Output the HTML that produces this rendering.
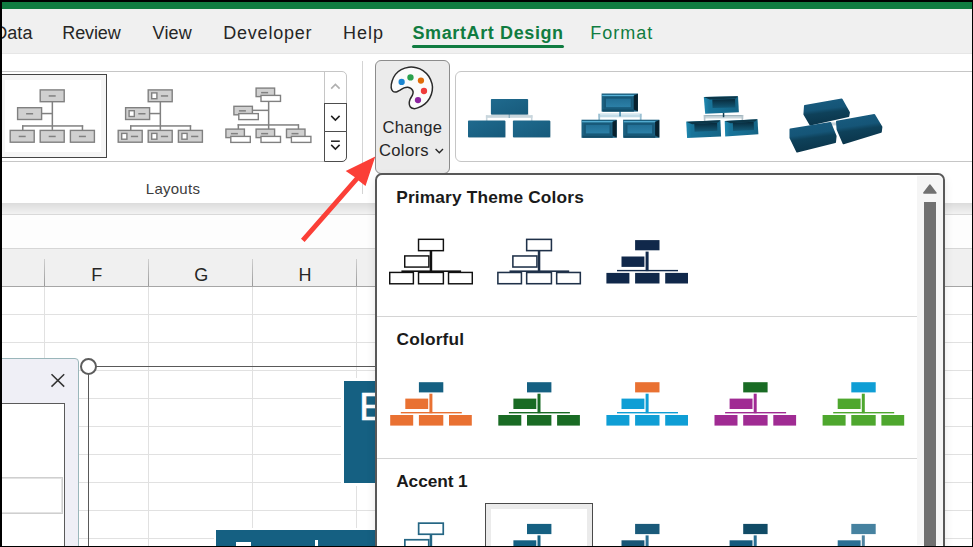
<!DOCTYPE html>
<html><head><meta charset="utf-8"><title>Excel SmartArt Change Colors</title>
<style>
html,body{margin:0;padding:0;}
body{width:973px;height:547px;overflow:hidden;background:#fff;font-family:"Liberation Sans",sans-serif;}
#root{position:relative;width:973px;height:547px;overflow:hidden;background:#fff;}
#root div{position:absolute;box-sizing:border-box;}
.t{white-space:nowrap;line-height:1;font-family:"Liberation Sans",sans-serif;}
svg{position:absolute;left:0;top:0;}
</style></head><body><div id="root">

<div style="left:0;top:0;width:973px;height:2px;background:#000"></div>
<div style="left:0;top:2px;width:973px;height:7px;background:#107c41"></div>
<div style="left:0;top:9px;width:973px;height:44.6px;background:#f0f0f0;border-bottom:1px solid #e6e6e6"></div>
<div style="left:0;top:203px;width:973px;height:12px;background:linear-gradient(#dcdcdc,#f2f2f2);border-bottom:1px solid #d9d9d9"></div>
<div style="left:0;top:215px;width:973px;height:33px;background:#fdfdfd"></div>
<div style="left:0;top:248px;width:973px;height:38px;background:#f0f0f0;border-top:1px solid #d6d6d6"></div>
<div style="left:0;top:286px;width:973px;height:1px;background:#a6a6a6"></div>
<div class="t" style="left:-5.80px;letter-spacing:0.063px;top:24.06px;font-size:18px;color:#262626;font-weight:400;">Data</div>
<div class="t" style="left:62.30px;letter-spacing:-0.124px;top:24.06px;font-size:18px;color:#262626;font-weight:400;">Review</div>
<div class="t" style="left:152.50px;letter-spacing:0.203px;top:24.06px;font-size:18px;color:#262626;font-weight:400;">View</div>
<div class="t" style="left:223.20px;letter-spacing:0.794px;top:24.06px;font-size:18px;color:#262626;font-weight:400;">Developer</div>
<div class="t" style="left:343.10px;letter-spacing:0.997px;top:24.06px;font-size:18px;color:#262626;font-weight:400;">Help</div>
<div class="t" style="left:412.50px;letter-spacing:0.612px;top:24.06px;font-size:18px;color:#107c41;font-weight:700;">SmartArt Design</div>
<div class="t" style="left:590.30px;letter-spacing:0.979px;top:24.06px;font-size:18px;color:#107c41;font-weight:400;">Format</div>
<div style="left:412.3px;top:45.3px;width:151.8px;height:3px;background:#107c41;border-radius:1.5px"></div>
<div style="left:-10px;top:71px;width:356.5px;height:91px;border:1px solid #c6c6c6;border-radius:5px;background:#fff"></div>
<div style="left:-2px;top:74px;width:109px;height:84px;border:1px solid #444;background:#f5f5f5"></div>
<div style="left:4.5px;top:80px;width:96.5px;height:72px;background:#fff"></div>
<div style="left:324px;top:72px;width:1px;height:31px;background:#c6c6c6"></div>
<div style="left:324px;top:103px;width:22.5px;height:28.6px;border:1.2px solid #4d4d4d;background:#fff"></div>
<div style="left:324px;top:131.2px;width:22.5px;height:30.6px;border:1.2px solid #4d4d4d;border-radius:0 0 5px 0;background:#fff"></div>
<div class="t" style="left:145.80px;letter-spacing:0.261px;top:180.90px;font-size:15px;color:#3c3c3c;font-weight:400;">Layouts</div>
<div style="left:362px;top:61px;width:1px;height:133px;background:#d4d4d4"></div>
<div style="left:375px;top:60px;width:75px;height:114px;border:1px solid #8c8c8c;border-radius:6px;background:#ebebeb"></div>
<div class="t" style="left:382.50px;letter-spacing:0.280px;top:119.55px;font-size:16.6px;color:#262626;font-weight:400;">Change</div>
<div class="t" style="left:379.00px;letter-spacing:0.329px;top:142.75px;font-size:16.6px;color:#262626;font-weight:400;">Colors</div>
<div style="left:454.5px;top:71px;width:540px;height:91px;border:1px solid #c6c6c6;border-radius:6px;background:#fff"></div>
<div style="left:0;top:314px;width:973px;height:1px;background:#e1e1e1"></div><div style="left:0;top:342px;width:973px;height:1px;background:#e1e1e1"></div><div style="left:0;top:370px;width:973px;height:1px;background:#e1e1e1"></div><div style="left:0;top:398px;width:973px;height:1px;background:#e1e1e1"></div><div style="left:0;top:426px;width:973px;height:1px;background:#e1e1e1"></div><div style="left:0;top:454px;width:973px;height:1px;background:#e1e1e1"></div><div style="left:0;top:482px;width:973px;height:1px;background:#e1e1e1"></div><div style="left:0;top:510px;width:973px;height:1px;background:#e1e1e1"></div><div style="left:0;top:538px;width:973px;height:1px;background:#e1e1e1"></div><div style="left:44px;top:287px;width:1px;height:260px;background:#e1e1e1"></div><div style="left:44px;top:259px;width:1px;height:27px;background:linear-gradient(#cfcfcf,#9a9a9a)"></div><div style="left:148px;top:287px;width:1px;height:260px;background:#e1e1e1"></div><div style="left:148px;top:259px;width:1px;height:27px;background:linear-gradient(#cfcfcf,#9a9a9a)"></div><div style="left:252px;top:287px;width:1px;height:260px;background:#e1e1e1"></div><div style="left:252px;top:259px;width:1px;height:27px;background:linear-gradient(#cfcfcf,#9a9a9a)"></div><div style="left:356px;top:287px;width:1px;height:260px;background:#e1e1e1"></div><div style="left:356px;top:259px;width:1px;height:27px;background:linear-gradient(#cfcfcf,#9a9a9a)"></div>
<div class="t" style="left:91.35px;top:266.26px;font-size:18px;color:#262626;font-weight:400;">F</div>
<div class="t" style="left:194.25px;top:266.26px;font-size:18px;color:#262626;font-weight:400;">G</div>
<div class="t" style="left:298.45px;top:266.26px;font-size:18px;color:#262626;font-weight:400;">H</div>
<div style="left:88px;top:366px;width:600px;height:300px;border:1px solid #595959;background:transparent"></div>
<div style="left:341px;top:378px;width:120px;height:108px;background:#fff"></div>
<div style="left:344px;top:380.5px;width:120px;height:102.5px;background:#156082"></div>
<div class="t" style="left:359.10px;top:386.99px;font-size:39px;color:#fff;font-weight:400;-webkit-text-stroke:0.5px #fff;">E</div>
<div style="left:213.5px;top:527.5px;width:220px;height:40px;background:#fff"></div>
<div style="left:216px;top:530px;width:220px;height:40px;background:#156082"></div>
<div style="left:235.5px;top:542.4px;width:15.4px;height:5px;background:#fff"></div>
<div style="left:315px;top:540px;width:3.3px;height:8px;background:#fff"></div>
<div style="left:79.7px;top:357.8px;width:17px;height:17px;border:2.9px solid #5c5c5c;border-radius:50%;background:#fff"></div>
<div style="left:-10px;top:358px;width:89px;height:300px;border:1px solid #9ab6ba;border-radius:4px;background:#efeff6"></div>
<div style="left:-10px;top:403px;width:75px;height:300px;border:1px solid #5a5a5a;background:#fff"></div>
<div style="left:-10px;top:477px;width:73px;height:36.5px;border:2.5px solid #e3e3e3;outline:1px solid #cfcfcf;outline-offset:-1px;background:#fff"></div>
<svg width="973" height="547" viewBox="0 0 973 547">
<rect x="51.60" y="101.90" width="1.50" height="28.00" fill="#808080" /><rect x="22.00" y="125.20" width="61.20" height="1.50" fill="#808080" /><rect x="22.00" y="125.40" width="1.50" height="5.00" fill="#808080" /><rect x="81.70" y="125.40" width="1.50" height="5.00" fill="#808080" /><rect x="41.70" y="112.80" width="10.50" height="1.50" fill="#808080" /><rect x="40.20" y="89.90" width="24.00" height="11.80" fill="#d0d0d0" stroke="#808080" stroke-width="1.4"/><rect x="48.70" y="95.20" width="7.00" height="1.50" fill="#808080" /><rect x="17.60" y="107.70" width="24.00" height="11.80" fill="#d0d0d0" stroke="#808080" stroke-width="1.4"/><rect x="26.10" y="113.00" width="7.00" height="1.50" fill="#808080" /><rect x="10.20" y="130.40" width="24.00" height="11.80" fill="#d0d0d0" stroke="#808080" stroke-width="1.4"/><rect x="18.70" y="135.70" width="7.00" height="1.50" fill="#808080" /><rect x="40.20" y="130.40" width="24.00" height="11.80" fill="#d0d0d0" stroke="#808080" stroke-width="1.4"/><rect x="48.70" y="135.70" width="7.00" height="1.50" fill="#808080" /><rect x="70.40" y="130.40" width="24.00" height="11.80" fill="#d0d0d0" stroke="#808080" stroke-width="1.4"/><rect x="78.90" y="135.70" width="7.00" height="1.50" fill="#808080" /><rect x="159.60" y="101.90" width="1.50" height="28.00" fill="#808080" /><rect x="130.00" y="125.20" width="61.20" height="1.50" fill="#808080" /><rect x="130.00" y="125.40" width="1.50" height="5.00" fill="#808080" /><rect x="189.70" y="125.40" width="1.50" height="5.00" fill="#808080" /><rect x="149.70" y="112.80" width="10.50" height="1.50" fill="#808080" /><rect x="148.20" y="89.90" width="24.00" height="11.80" fill="#d0d0d0" stroke="#808080" stroke-width="1.4"/><rect x="151.70" y="92.90" width="5.2" height="5.8" fill="#fff" stroke="#808080" stroke-width="1.4"/><rect x="160.90" y="95.20" width="7.20" height="1.50" fill="#808080" /><rect x="125.60" y="107.70" width="24.00" height="11.80" fill="#d0d0d0" stroke="#808080" stroke-width="1.4"/><rect x="129.10" y="110.70" width="5.2" height="5.8" fill="#fff" stroke="#808080" stroke-width="1.4"/><rect x="138.30" y="113.00" width="7.20" height="1.50" fill="#808080" /><rect x="118.20" y="130.40" width="24.00" height="11.80" fill="#d0d0d0" stroke="#808080" stroke-width="1.4"/><rect x="121.70" y="133.40" width="5.2" height="5.8" fill="#fff" stroke="#808080" stroke-width="1.4"/><rect x="130.90" y="135.70" width="7.20" height="1.50" fill="#808080" /><rect x="148.20" y="130.40" width="24.00" height="11.80" fill="#d0d0d0" stroke="#808080" stroke-width="1.4"/><rect x="151.70" y="133.40" width="5.2" height="5.8" fill="#fff" stroke="#808080" stroke-width="1.4"/><rect x="160.90" y="135.70" width="7.20" height="1.50" fill="#808080" /><rect x="178.40" y="130.40" width="24.00" height="11.80" fill="#d0d0d0" stroke="#808080" stroke-width="1.4"/><rect x="181.90" y="133.40" width="5.2" height="5.8" fill="#fff" stroke="#808080" stroke-width="1.4"/><rect x="191.10" y="135.70" width="7.20" height="1.50" fill="#808080" /><rect x="267.90" y="102.00" width="1.50" height="27.00" fill="#808080" /><rect x="237.60" y="124.20" width="61.20" height="1.50" fill="#808080" /><rect x="237.60" y="124.20" width="1.50" height="5.00" fill="#808080" /><rect x="297.70" y="124.20" width="1.50" height="5.00" fill="#808080" /><rect x="252.00" y="109.60" width="16.00" height="1.50" fill="#808080" /><rect x="256.10" y="88.10" width="18.5" height="8.5" fill="#d0d0d0" stroke="#808080" stroke-width="1.4"/><rect x="261.10" y="91.90" width="7.00" height="1.50" fill="#808080" /><rect x="261.00" y="95.40" width="19.5" height="6" fill="#fff" stroke="#808080" stroke-width="1.4"/><rect x="233.90" y="106.30" width="18.5" height="8.5" fill="#d0d0d0" stroke="#808080" stroke-width="1.4"/><rect x="238.90" y="110.10" width="7.00" height="1.50" fill="#808080" /><rect x="238.80" y="113.60" width="19.5" height="6" fill="#fff" stroke="#808080" stroke-width="1.4"/><rect x="225.90" y="129.10" width="18.5" height="8.5" fill="#d0d0d0" stroke="#808080" stroke-width="1.4"/><rect x="230.90" y="132.90" width="7.00" height="1.50" fill="#808080" /><rect x="230.80" y="136.40" width="19.5" height="6" fill="#fff" stroke="#808080" stroke-width="1.4"/><rect x="256.10" y="129.10" width="18.5" height="8.5" fill="#d0d0d0" stroke="#808080" stroke-width="1.4"/><rect x="261.10" y="132.90" width="7.00" height="1.50" fill="#808080" /><rect x="261.00" y="136.40" width="19.5" height="6" fill="#fff" stroke="#808080" stroke-width="1.4"/><rect x="286.50" y="129.10" width="18.5" height="8.5" fill="#d0d0d0" stroke="#808080" stroke-width="1.4"/><rect x="291.50" y="132.90" width="7.00" height="1.50" fill="#808080" /><rect x="291.40" y="136.40" width="19.5" height="6" fill="#fff" stroke="#808080" stroke-width="1.4"/>
<defs>
<linearGradient id="g1" x1="0" y1="0" x2="1" y2="1"><stop offset="0" stop-color="#1f6a8e"/><stop offset="1" stop-color="#175a7b"/></linearGradient>
<linearGradient id="g2" x1="0" y1="0" x2="0" y2="1"><stop offset="0" stop-color="#4aa0c6"/><stop offset=".25" stop-color="#2a7ea6"/><stop offset="1" stop-color="#0f4a66"/></linearGradient>
<linearGradient id="g2i" x1="0" y1="0" x2="0" y2="1"><stop offset="0" stop-color="#226f95"/><stop offset="1" stop-color="#2c80a7"/></linearGradient>
<linearGradient id="g3" x1="0" y1="0" x2="1" y2="0"><stop offset="0" stop-color="#1f8ab1"/><stop offset=".15" stop-color="#18749a"/><stop offset="1" stop-color="#156485"/></linearGradient>
<linearGradient id="g3i" x1="0" y1="0" x2="0" y2="1"><stop offset="0" stop-color="#08293a"/><stop offset="1" stop-color="#135a78"/></linearGradient>
<linearGradient id="g4" x1="0" y1="0" x2="0.22" y2="1"><stop offset="0" stop-color="#185c80"/><stop offset=".45" stop-color="#155577"/><stop offset=".6" stop-color="#0e415a"/><stop offset="1" stop-color="#0b364c"/></linearGradient>
<filter id="sh" x="-10%" y="-10%" width="120%" height="130%"><feGaussianBlur stdDeviation=".5"/></filter>
</defs>
<path d="M331.2,88.6 L335.4,84.4 L339.6,88.6" fill="none" stroke="#b0b0b0" stroke-width="1.6"/>
<path d="M331.2,115.9 L335.4,120.1 L339.6,115.9" fill="none" stroke="#1f1f1f" stroke-width="1.5"/>
<path d="M331,141.2 H339.8" fill="none" stroke="#1f1f1f" stroke-width="1.5"/>
<path d="M331.2,144.9 L335.4,149.1 L339.6,144.9" fill="none" stroke="#1f1f1f" stroke-width="1.5"/>
<path d="M391.18,87.67 C391.02,85.93 391.42,83.23 392.13,81.02 C392.84,78.80 393.95,76.26 395.46,74.36 C396.96,72.46 398.94,70.79 401.16,69.61 C403.38,68.42 406.23,67.55 408.77,67.23 C411.30,66.91 414.00,67.15 416.37,67.70 C418.75,68.26 420.97,69.13 423.03,70.56 C425.09,71.98 427.23,74.04 428.73,76.26 C430.24,78.48 431.48,81.49 432.06,83.87 C432.65,86.24 432.65,88.15 432.25,90.52 C431.86,92.90 430.91,95.91 429.69,98.13 C428.47,100.35 426.83,102.25 424.93,103.83 C423.03,105.42 420.18,106.84 418.28,107.64 C416.37,108.43 414.87,108.75 413.52,108.59 C412.18,108.43 410.91,107.64 410.19,106.69 C409.48,105.73 409.24,104.15 409.24,102.88 C409.24,101.61 409.64,100.43 410.19,99.08 C410.75,97.73 412.10,96.07 412.57,94.80 C413.05,93.53 413.28,92.50 413.05,91.47 C412.81,90.44 412.02,89.33 411.15,88.62 C410.27,87.91 409.01,87.32 407.82,87.19 C406.63,87.07 405.28,87.39 404.02,87.86 C402.75,88.34 401.48,89.37 400.21,90.05 C398.94,90.73 397.60,91.71 396.41,91.95 C395.22,92.19 393.95,92.19 393.08,91.47 C392.21,90.76 391.34,89.41 391.18,87.67Z" fill="#fbfbfb" stroke="#2a2a2a" stroke-width="1.5" stroke-linejoin="round"/>
<circle cx="401.64" cy="81.97" r="3.15" fill="#1c86d1"/>
<circle cx="410.48" cy="77.40" r="3.15" fill="#2aa14d"/>
<circle cx="420.94" cy="80.54" r="3.15" fill="#e06c08"/>
<circle cx="423.98" cy="91.00" r="3.15" fill="#ef3b3b"/>
<circle cx="417.99" cy="100.03" r="3.15" fill="#8c249f"/>
<path d="M435.6,149 L439.3,152.7 L443,149" fill="none" stroke="#262626" stroke-width="1.4"/>
<path d="M51.5,374.2 L64.2,386.6 M64.2,374.2 L51.5,386.6" fill="none" stroke="#333" stroke-width="1.5"/>
<rect x="485.9" y="115.2" width="46.6" height="2.6" fill="#c9d6dd"/><rect x="485.9" y="115.2" width="1.6" height="6" fill="#c9d6dd"/><rect x="530.9" y="115.2" width="1.6" height="6" fill="#c9d6dd"/><rect x="508.6" y="114" width="1.4" height="4" fill="#8fb0c0"/>
<rect x="491.29999999999995" y="99.6" width="37.1" height="15.6" fill="#7d9aa8" opacity=".55" filter="url(#sh)"/>
<rect x="490.9" y="99" width="37.1" height="15.6" rx=".8" fill="url(#g1)"/>
<rect x="468.4" y="121.19999999999999" width="37.3" height="16.6" fill="#7d9aa8" opacity=".55" filter="url(#sh)"/>
<rect x="468" y="120.6" width="37.3" height="16.6" rx=".8" fill="url(#g1)"/>
<rect x="513.3" y="121.19999999999999" width="37.3" height="16.6" fill="#7d9aa8" opacity=".55" filter="url(#sh)"/>
<rect x="512.9" y="120.6" width="37.3" height="16.6" rx=".8" fill="url(#g1)"/>
<rect x="598.3" y="113.4" width="43.3" height="3.9" fill="#c3dce8"/><rect x="598.3" y="113.4" width="43.3" height="1.2" fill="#e2eef4"/><rect x="598.3" y="114" width="1.8" height="6" fill="#9cc0d2"/><rect x="639.8" y="114" width="1.8" height="6" fill="#9cc0d2"/><rect x="619.3" y="111" width="1.5" height="5.4" fill="#3f86a8"/>
<rect x="601.6" y="93.5" width="36.3" height="18.1" fill="#1b6080"/>
<rect x="602.2" y="94.9" width="31.799999999999997" height="1.2" fill="#58b3d8"/>
<polygon points="637.9,93.8 637.9,111.3 633.6999999999999,109.39999999999999 633.6999999999999,95.7" fill="#07212e"/>
<rect x="604.2" y="97.1" width="28.099999999999998" height="11.500000000000002" fill="#175877"/>
<rect x="606.0" y="98.7" width="24.699999999999996" height="8.500000000000002" fill="url(#g2i)"/>
<rect x="602.6" y="109.39999999999999" width="31.299999999999997" height="2.2" fill="#134c68"/>
<rect x="581.5" y="119.7" width="35.2" height="18.1" fill="#1b6080"/>
<rect x="582.1" y="121.10000000000001" width="30.700000000000003" height="1.2" fill="#58b3d8"/>
<polygon points="616.7,120.0 616.7,137.5 612.5,135.60000000000002 612.5,121.9" fill="#07212e"/>
<rect x="584.1" y="123.3" width="27.000000000000004" height="11.500000000000002" fill="#175877"/>
<rect x="585.9" y="124.9" width="23.6" height="8.500000000000002" fill="url(#g2i)"/>
<rect x="582.5" y="135.60000000000002" width="30.200000000000003" height="2.2" fill="#134c68"/>
<rect x="623.1" y="119.7" width="36.2" height="18.1" fill="#1b6080"/>
<rect x="623.7" y="121.10000000000001" width="31.700000000000003" height="1.2" fill="#58b3d8"/>
<polygon points="659.3000000000001,120.0 659.3000000000001,137.5 655.1,135.60000000000002 655.1,121.9" fill="#07212e"/>
<rect x="625.7" y="123.3" width="28.000000000000004" height="11.500000000000002" fill="#175877"/>
<rect x="627.5" y="124.9" width="24.6" height="8.500000000000002" fill="url(#g2i)"/>
<rect x="624.1" y="135.60000000000002" width="31.200000000000003" height="2.2" fill="#134c68"/>
<rect x="703.8" y="115.2" width="39.4" height="3.3" fill="#cbd7dc"/><rect x="703.8" y="115.2" width="39.4" height="1" fill="#93a8b2"/><rect x="722.8" y="113" width="1.5" height="4.2" fill="#123f54"/><rect x="703.8" y="115.2" width="1.6" height="6" fill="#b5c4cb"/><rect x="741.6" y="115.2" width="1.6" height="5" fill="#b5c4cb"/>
<polygon points="703.8,97.1 738.0,96.2 738.9,112.3 705.2,113.8" fill="url(#g3)"/>
<polygon points="703.8,97.1 738.0,96.2 735.5,98.4 709.8,99.5" fill="#0c3648"/>
<polygon points="712.3,99.5 735.1,98.9 735.4,107.5 712.6,108.1" fill="url(#g3i)"/>
<polygon points="686.2,121.8 720.4,120.2 721.1,136.6 687.1,138.0" fill="url(#g3)"/>
<polygon points="686.2,121.8 720.4,120.2 717.9,122.4 692.2,124.2" fill="#0c3648"/>
<polygon points="694.3,123.8 717.1,122.7 717.4,130.7 694.6,131.8" fill="url(#g3i)"/>
<polygon points="724.7,120.9 757.5,119.3 758.4,134.2 725.2,136.6" fill="url(#g3)"/>
<polygon points="724.7,120.9 757.5,119.3 755.0,121.5 730.7,123.3" fill="#0c3648"/>
<polygon points="732.8,122.8 753.7,121.8 754.0,129.9 733.1,130.9" fill="url(#g3i)"/>
<rect x="831" y="122.4" width="7" height="3" fill="#c6d3da"/>
<polygon points="804.9,105.9 841.7,99.5 849.0,112.5 848.4,116.1 810.3,124.6 804.3,114.3" fill="url(#g4)" stroke="url(#g4)" stroke-width="1.8" stroke-linejoin="round"/>
<polygon points="790.4,129.4 830.3,122.8 835.7,136.1 835.1,142.1 797.1,151.7 790.4,137.9" fill="url(#g4)" stroke="url(#g4)" stroke-width="1.8" stroke-linejoin="round"/>
<polygon points="836.9,121.6 874.3,114.9 881.5,127.0 880.9,131.8 843.5,143.3 837.5,129.4" fill="url(#g4)" stroke="url(#g4)" stroke-width="1.8" stroke-linejoin="round"/>
</svg>
<div style="left:374.6px;top:173.1px;width:570.8px;height:400px;border:2.3px solid #585858;border-radius:7px;background:#fff;box-shadow:0 4px 10px 0 rgba(0,0,0,.10)"></div>
<div style="left:917px;top:176px;width:26px;height:369px;background:#f5f5f5;border-radius:0 5px 0 0"></div>
<div style="left:924px;top:201.5px;width:12px;height:350px;background:#707070"></div>
<div style="left:376.5px;top:316px;width:540.5px;height:1px;background:#d4d4d4"></div>
<div style="left:376.5px;top:458px;width:540.5px;height:1px;background:#d4d4d4"></div>
<div class="t" style="left:396.20px;letter-spacing:0.169px;top:188.96px;font-size:17.3px;color:#1a1a1a;font-weight:700;">Primary Theme Colors</div>
<div class="t" style="left:396.60px;letter-spacing:0.167px;top:330.86px;font-size:17.3px;color:#1a1a1a;font-weight:700;">Colorful</div>
<div class="t" style="left:396.20px;letter-spacing:-0.075px;top:472.86px;font-size:17.3px;color:#1a1a1a;font-weight:700;">Accent 1</div>
<div style="left:485px;top:503px;width:108px;height:60px;border:1px solid #4a4a4a;background:#ebebeb"></div>
<div style="left:490.8px;top:508.5px;width:96.4px;height:60px;background:#fff"></div>
<svg width="973" height="547" viewBox="0 0 973 547">
<rect x="429.70" y="250.60" width="2.50" height="21.00" fill="#111111" /><rect x="401.40" y="270.40" width="59.70" height="1.60" fill="#111111" /><rect x="418.53" y="239.32" width="24.85" height="11.35" fill="#fff" stroke="#111111" stroke-width="1.45"/><rect x="404.73" y="255.92" width="24.15" height="11.15" fill="#fff" stroke="#111111" stroke-width="1.45"/><rect x="389.73" y="272.43" width="23.65" height="11.35" fill="#fff" stroke="#111111" stroke-width="1.45"/><rect x="418.53" y="272.43" width="24.85" height="11.35" fill="#fff" stroke="#111111" stroke-width="1.45"/><rect x="448.53" y="272.43" width="23.75" height="11.35" fill="#fff" stroke="#111111" stroke-width="1.45"/><rect x="537.80" y="250.60" width="2.50" height="21.00" fill="#1f3149" /><rect x="509.50" y="270.40" width="59.70" height="1.60" fill="#1f3149" /><rect x="526.67" y="239.38" width="24.75" height="11.25" fill="#fff" stroke="#1f3149" stroke-width="1.55"/><rect x="512.88" y="255.97" width="24.05" height="11.05" fill="#fff" stroke="#1f3149" stroke-width="1.55"/><rect x="497.88" y="272.47" width="23.55" height="11.25" fill="#fff" stroke="#1f3149" stroke-width="1.55"/><rect x="526.67" y="272.47" width="24.75" height="11.25" fill="#fff" stroke="#1f3149" stroke-width="1.55"/><rect x="556.67" y="272.47" width="23.65" height="11.25" fill="#fff" stroke="#1f3149" stroke-width="1.55"/><rect x="645.60" y="251.60" width="3.00" height="19.50" fill="#10284a" /><rect x="617.00" y="269.90" width="61.00" height="1.40" fill="#10284a" /><rect x="635.10" y="240.10" width="24.40" height="10.20" fill="#10284a" /><rect x="621.50" y="256.50" width="22.90" height="10.40" fill="#10284a" /><rect x="606.40" y="272.90" width="23.00" height="10.60" fill="#10284a" /><rect x="635.10" y="272.90" width="24.40" height="10.60" fill="#10284a" /><rect x="665.20" y="272.90" width="22.80" height="10.60" fill="#10284a" /><rect x="429.40" y="393.70" width="3.00" height="19.50" fill="#E97132" /><rect x="400.80" y="412.00" width="61.00" height="1.40" fill="#E97132" /><rect x="418.90" y="382.20" width="24.40" height="10.20" fill="#156082" /><rect x="405.30" y="398.60" width="22.90" height="10.40" fill="#E97132" /><rect x="390.20" y="415.00" width="23.00" height="10.60" fill="#E97132" /><rect x="418.90" y="415.00" width="24.40" height="10.60" fill="#E97132" /><rect x="449.00" y="415.00" width="22.80" height="10.60" fill="#E97132" /><rect x="537.50" y="393.70" width="3.00" height="19.50" fill="#196B24" /><rect x="508.90" y="412.00" width="61.00" height="1.40" fill="#196B24" /><rect x="527.00" y="382.20" width="24.40" height="10.20" fill="#156082" /><rect x="513.40" y="398.60" width="22.90" height="10.40" fill="#196B24" /><rect x="498.30" y="415.00" width="23.00" height="10.60" fill="#196B24" /><rect x="527.00" y="415.00" width="24.40" height="10.60" fill="#196B24" /><rect x="557.10" y="415.00" width="22.80" height="10.60" fill="#196B24" /><rect x="645.60" y="393.70" width="3.00" height="19.50" fill="#0F9ED5" /><rect x="617.00" y="412.00" width="61.00" height="1.40" fill="#0F9ED5" /><rect x="635.10" y="382.20" width="24.40" height="10.20" fill="#E97132" /><rect x="621.50" y="398.60" width="22.90" height="10.40" fill="#0F9ED5" /><rect x="606.40" y="415.00" width="23.00" height="10.60" fill="#0F9ED5" /><rect x="635.10" y="415.00" width="24.40" height="10.60" fill="#0F9ED5" /><rect x="665.20" y="415.00" width="22.80" height="10.60" fill="#0F9ED5" /><rect x="753.70" y="393.70" width="3.00" height="19.50" fill="#A02B93" /><rect x="725.10" y="412.00" width="61.00" height="1.40" fill="#A02B93" /><rect x="743.20" y="382.20" width="24.40" height="10.20" fill="#196B24" /><rect x="729.60" y="398.60" width="22.90" height="10.40" fill="#A02B93" /><rect x="714.50" y="415.00" width="23.00" height="10.60" fill="#A02B93" /><rect x="743.20" y="415.00" width="24.40" height="10.60" fill="#A02B93" /><rect x="773.30" y="415.00" width="22.80" height="10.60" fill="#A02B93" /><rect x="861.80" y="393.70" width="3.00" height="19.50" fill="#4EA72E" /><rect x="833.20" y="412.00" width="61.00" height="1.40" fill="#4EA72E" /><rect x="851.30" y="382.20" width="24.40" height="10.20" fill="#0F9ED5" /><rect x="837.70" y="398.60" width="22.90" height="10.40" fill="#4EA72E" /><rect x="822.60" y="415.00" width="23.00" height="10.60" fill="#4EA72E" /><rect x="851.30" y="415.00" width="24.40" height="10.60" fill="#4EA72E" /><rect x="881.40" y="415.00" width="22.80" height="10.60" fill="#4EA72E" /><rect x="429.70" y="534.30" width="2.50" height="21.00" fill="#256684" /><rect x="401.40" y="554.10" width="59.70" height="1.60" fill="#256684" /><rect x="418.65" y="523.15" width="24.60" height="11.10" fill="#fff" stroke="#256684" stroke-width="1.7"/><rect x="404.85" y="539.75" width="23.90" height="10.90" fill="#fff" stroke="#256684" stroke-width="1.7"/><rect x="389.85" y="556.25" width="23.40" height="11.10" fill="#fff" stroke="#256684" stroke-width="1.7"/><rect x="418.65" y="556.25" width="24.60" height="11.10" fill="#fff" stroke="#256684" stroke-width="1.7"/><rect x="448.65" y="556.25" width="23.50" height="11.10" fill="#fff" stroke="#256684" stroke-width="1.7"/><rect x="537.50" y="535.40" width="3.00" height="19.50" fill="#156082" /><rect x="508.90" y="553.70" width="61.00" height="1.40" fill="#156082" /><rect x="527.00" y="523.90" width="24.40" height="10.20" fill="#156082" /><rect x="513.40" y="540.30" width="22.90" height="10.40" fill="#156082" /><rect x="498.30" y="556.70" width="23.00" height="10.60" fill="#156082" /><rect x="527.00" y="556.70" width="24.40" height="10.60" fill="#156082" /><rect x="557.10" y="556.70" width="22.80" height="10.60" fill="#156082" /><rect x="645.60" y="535.40" width="3.00" height="19.50" fill="#2a6f93" /><rect x="617.00" y="553.70" width="61.00" height="1.40" fill="#2a6f93" /><rect x="635.10" y="523.90" width="24.40" height="10.20" fill="#1a5a7a" /><rect x="621.50" y="540.30" width="22.90" height="10.40" fill="#185676" /><rect x="606.40" y="556.70" width="23.00" height="10.60" fill="#156082" /><rect x="635.10" y="556.70" width="24.40" height="10.60" fill="#156082" /><rect x="665.20" y="556.70" width="22.80" height="10.60" fill="#156082" /><rect x="753.70" y="535.40" width="3.00" height="19.50" fill="#2a6f93" /><rect x="725.10" y="553.70" width="61.00" height="1.40" fill="#2a6f93" /><rect x="743.20" y="523.90" width="24.40" height="10.20" fill="#114b66" /><rect x="729.60" y="540.30" width="22.90" height="10.40" fill="#155a7d" /><rect x="714.50" y="556.70" width="23.00" height="10.60" fill="#156082" /><rect x="743.20" y="556.70" width="24.40" height="10.60" fill="#156082" /><rect x="773.30" y="556.70" width="22.80" height="10.60" fill="#156082" /><rect x="861.80" y="535.40" width="3.00" height="19.50" fill="#4f83a0" /><rect x="833.20" y="553.70" width="61.00" height="1.40" fill="#4f83a0" /><rect x="851.30" y="523.90" width="24.40" height="10.20" fill="#4682a0" /><rect x="837.70" y="540.30" width="22.90" height="10.40" fill="#2a6f93" /><rect x="822.60" y="556.70" width="23.00" height="10.60" fill="#156082" /><rect x="851.30" y="556.70" width="24.40" height="10.60" fill="#156082" /><rect x="881.40" y="556.70" width="22.80" height="10.60" fill="#156082" />
<polygon points="923.8,193 936,193 929.9,185" fill="#707070" stroke="#707070" stroke-width="1.4" stroke-linejoin="round"/>
<polygon points="304.6,242.0 358.5,180.5 365.5,186.0 375.3,156.4 345.7,171.0 354.9,177.3 301.0,238.8" fill="#fb3f37"/>
</svg>
<div style="left:0;top:0;width:2px;height:547px;background:#000"></div>
<div style="left:0;top:545.7px;width:973px;height:1.3px;background:#000"></div>
<div style="left:971.9px;top:0;width:1.1px;height:547px;background:#000"></div>
</div>
</body></html>
